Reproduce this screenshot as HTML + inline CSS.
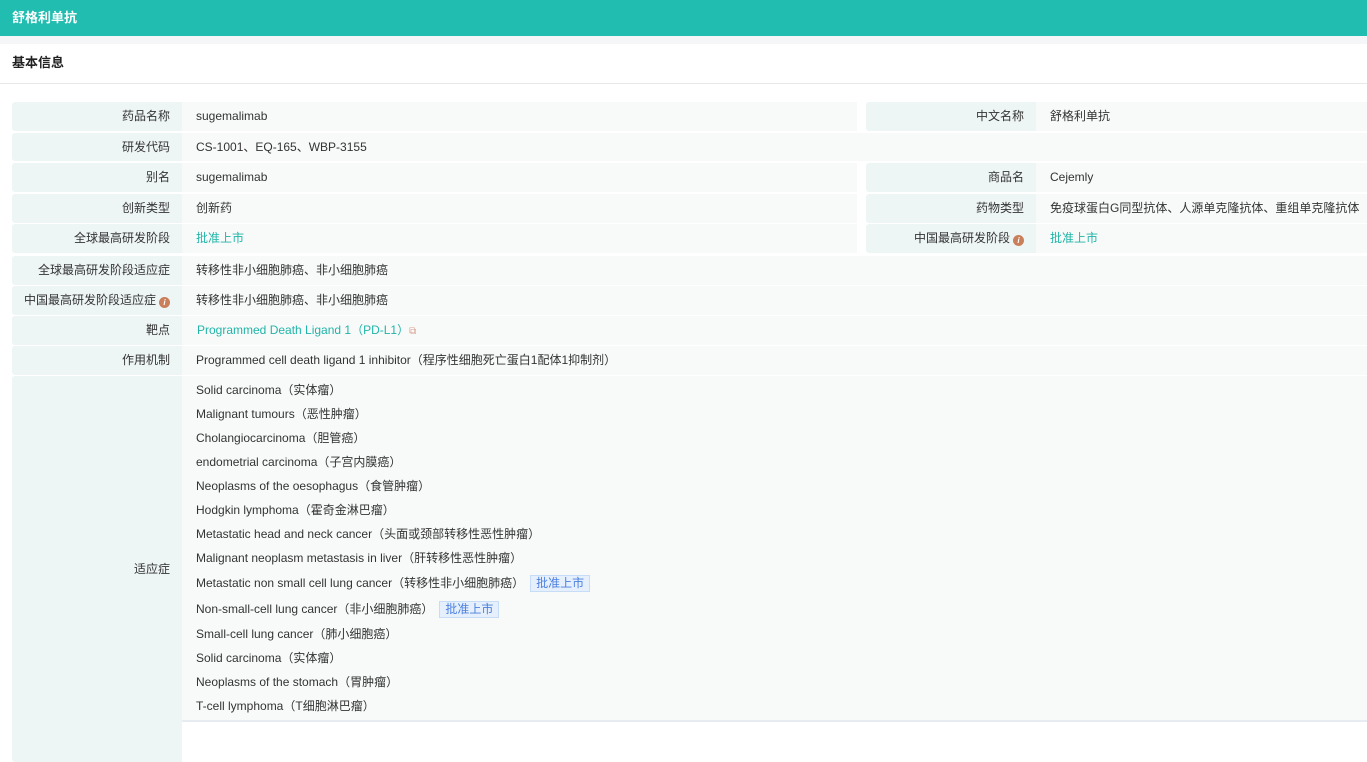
<!DOCTYPE html>
<html><head><meta charset="utf-8"><style>
*{margin:0;padding:0;box-sizing:border-box}
body{width:1367px;height:724px;overflow:hidden;background:#fff;font-family:"Liberation Sans","Noto Sans CJK SC",sans-serif;font-size:12px;color:#333}
.hd{height:36px;background:#20bdb0;color:#fff;font-weight:bold;font-size:13px;line-height:36px;padding-left:12px}
.gap{height:8px;background:#f5f6f7}
.sec{height:40px;border-bottom:1px solid #e8e8e8;line-height:38px;padding-left:12px;font-weight:bold;font-size:13px;color:#222}
.tbl{position:absolute;left:12px;top:102px;width:1355px}
.row{display:flex;margin-bottom:2px}
.l{width:170px;background:#eef5f5;text-align:right;padding-right:12px;border-radius:3px 0 0 3px;flex:none}
.v{background:#f8fafa;padding-left:14px;flex:none}
.w1{width:675px}.wf{width:1185px}
.r2{margin-left:9px}
.h30{height:29px;line-height:29px}
.g{color:#20b5a8}
.i{display:inline-block;width:11px;height:11px;border-radius:50%;background:#c9805a;color:#fff;font-size:8px;line-height:11px;text-align:center;font-style:italic;font-weight:bold;vertical-align:-1px;margin-left:3px}
.ind div{height:24px;line-height:24px}
.ind div.b{height:26px;line-height:26px}
.tag{display:inline-block;border:1px solid #c7dcf7;background:#e6f0fd;color:#4a7fe0;padding:0 5px;line-height:15px;margin-left:6px}
</style></head><body>
<div class="hd">舒格利单抗</div>
<div class="gap"></div>
<div class="sec">基本信息</div>
<div class="tbl">
<div class="row h30"><div class="l">药品名称</div><div class="v w1">sugemalimab</div><div class="l r2">中文名称</div><div class="v" style="width:331px">舒格利单抗</div></div>
<div class="row h30" style="height:28px;line-height:28px"><div class="l">研发代码</div><div class="v w1">CS-1001、EQ-165、WBP-3155</div><div class="v" style="width:510px"></div></div>
<div class="row h30"><div class="l">别名</div><div class="v w1">sugemalimab</div><div class="l r2">商品名</div><div class="v" style="width:331px">Cejemly</div></div>
<div class="row h30" style="margin-bottom:1px"><div class="l">创新类型</div><div class="v w1">创新药</div><div class="l r2">药物类型</div><div class="v" style="width:331px">免疫球蛋白G同型抗体、人源单克隆抗体、重组单克隆抗体</div></div>
<div class="row h30" style="margin-bottom:3px"><div class="l">全球最高研发阶段</div><div class="v w1 g">批准上市</div><div class="l r2">中国最高研发阶段<span class="i">i</span></div><div class="v g" style="width:331px">批准上市</div></div>
<div class="row h30" style="margin-bottom:1px"><div class="l">全球最高研发阶段适应症</div><div class="v wf">转移性非小细胞肺癌、非小细胞肺癌</div></div>
<div class="row h30" style="margin-bottom:1px"><div class="l">中国最高研发阶段适应症<span class="i">i</span></div><div class="v wf">转移性非小细胞肺癌、非小细胞肺癌</div></div>
<div class="row h30" style="margin-bottom:1px"><div class="l">靶点</div><div class="v wf g" style="padding-left:15px">Programmed Death Ligand 1（PD-L1）<span style="color:#d9a090;font-size:10px">⧉</span></div></div>
<div class="row h30" style="margin-bottom:1px"><div class="l">作用机制</div><div class="v wf">Programmed cell death ligand 1 inhibitor（程序性细胞死亡蛋白1配体1抑制剂）</div></div>
<div class="row" style="height:346px"><div class="l" style="line-height:386px;height:386px">适应症</div><div class="v wf ind" style="padding-top:2px;height:346px;border-bottom:2px solid #e6ecf2">
<div>Solid carcinoma（实体瘤）</div>
<div>Malignant tumours（恶性肿瘤）</div>
<div>Cholangiocarcinoma（胆管癌）</div>
<div>endometrial carcinoma（子宫内膜癌）</div>
<div>Neoplasms of the oesophagus（食管肿瘤）</div>
<div>Hodgkin lymphoma（霍奇金淋巴瘤）</div>
<div>Metastatic head and neck cancer（头面或颈部转移性恶性肿瘤）</div>
<div>Malignant neoplasm metastasis in liver（肝转移性恶性肿瘤）</div>
<div class="b">Metastatic non small cell lung cancer（转移性非小细胞肺癌）<span class="tag">批准上市</span></div>
<div class="b">Non-small-cell lung cancer（非小细胞肺癌）<span class="tag">批准上市</span></div>
<div>Small-cell lung cancer（肺小细胞癌）</div>
<div>Solid carcinoma（实体瘤）</div>
<div>Neoplasms of the stomach（胃肿瘤）</div>
<div>T-cell lymphoma（T细胞淋巴瘤）</div>
</div></div>
</div>
</body></html>
